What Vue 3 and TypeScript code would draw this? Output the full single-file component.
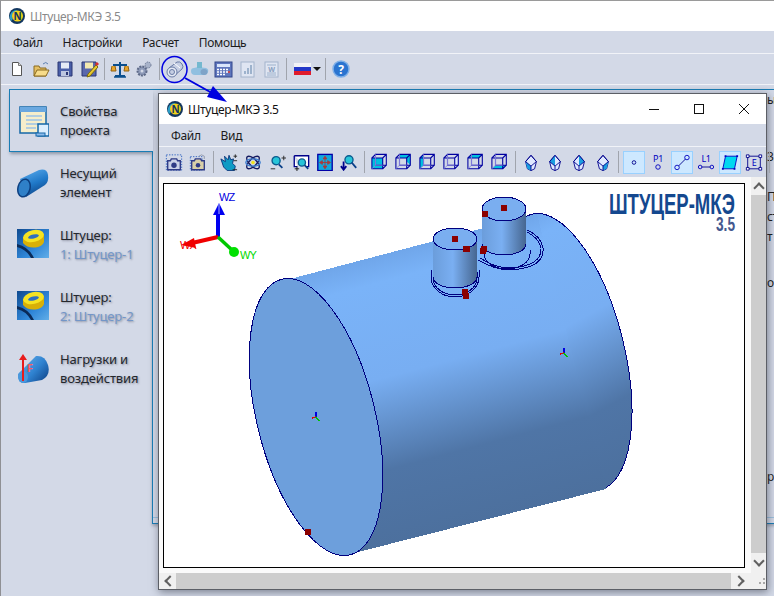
<script setup lang="ts">
// toolbar icons are 20x20 svg fragments, null = separator
const cube = (face: string, fill = '#00c0e0') =>
  `<polygon points="${face}" fill="${fill}"/>
   <path d="M5 1h12v12H5zM1 5h12v12H1zM1 5l4-4M13 5l4-4M13 17l4-4" fill="none" stroke="#0000a0" stroke-width="1.200"/>
   <path d="M1 17l4-4M5 13h8M5 1v12" fill="none" stroke="#8a86e0"/>`

const gem = (facet: string) =>
  `<path d="M10 2l6 7-2 8-4 2-4-2-2-8z" fill="#dfe9ff" stroke="#00008b"/>
   <path d="${facet}" fill="#1a9de0"/>
   <path d="M10 2l-6 7 6 5 6-5zM10 14v5" fill="none" stroke="#00008b"/>`

const docGhost = (inner: string) =>
  `<rect x="4" y="3" width="13" height="15" fill="#dfe5f2" stroke="#a4b4cc"/>${inner}`

const mainTools: (string | null)[] = [
  `<path d="M5.5 3.5h6l3 3v10h-9z" fill="#fff" stroke="#555"/><path d="M11.5 3.5v3h3" fill="#ddd" stroke="#777"/>`,
  `<path d="M3 17V7h5l1 2h6v8z" fill="#e5bf63" stroke="#8a6a20"/><path d="M3 17l3-6h12l-3 6z" fill="#f7dc8a" stroke="#8a6a20"/><path d="M12 5q3-3 5 0" fill="none" stroke="#5c7fb0"/>`,
  `<path d="M3 3h14v14H3z" fill="#4a5fa8" stroke="#2a3672"/><rect x="6" y="3.500" width="8" height="6" fill="#e6ebf5"/><rect x="6" y="12" width="8" height="5" fill="#bcc6e0"/><rect x="11" y="13" width="2" height="3" fill="#2a3672"/>`,
  `<path d="M3 3h14v14H3z" fill="#5a68ac" stroke="#2a3672"/><rect x="6" y="3.500" width="8" height="6" fill="#f4e9b0"/><path d="M9 15l8-9 2 2-8 9-3 1z" fill="#e8c92e" stroke="#7a6a10"/><path d="M16 5l2-2 2 2-2 2z" fill="#d8302c"/>`,
  null,
  `<path d="M10 3v13M3 6h14M5 17h10" fill="none" stroke="#0b4f8e" stroke-width="2"/><path d="M2 7l-1 5h5l-1-5M15 7l-1 5h5l-1-5" fill="#e8a52c" stroke="#94620f"/><path d="M4 18h12" stroke="#0b4f8e" stroke-width="1.500"/>`,
  `<circle cx="8" cy="12" r="4.500" fill="#8d9ab8" stroke="#5e6a88" stroke-width="2" stroke-dasharray="2 1"/><circle cx="8" cy="12" r="1.500" fill="#d3d9e7"/><circle cx="14" cy="6" r="3" fill="#a7b2c9" stroke="#6e7a96" stroke-dasharray="1.500 1"/>`,
  null,
  `<path d="M4 9l8-6q3-1 5 2t0 5l-8 7z" fill="#c6cfe4" stroke="#6a7ca6"/><circle cx="7" cy="13" r="5" fill="#e4e9f4" stroke="#6a7ca6"/><circle cx="7" cy="13" r="2.500" fill="#c6cfe4" stroke="#6a7ca6"/><path d="M9 4l6 5" stroke="#fff"/>`,
  `<path d="M2 12q0-3 3-3l4-1 8 1q3 1 2 4t-4 3H6q-4 0-4-4z" fill="#8fbfe0"/><rect x="8" y="3" width="5" height="6" fill="#74b8cf"/><ellipse cx="15" cy="13" rx="3.500" ry="3" fill="#7ea3c8"/>`,
  `<rect x="2" y="3" width="17" height="15" fill="#5f76bd" stroke="#33478c"/><rect x="4" y="5" width="13" height="3" fill="#d9e5fb"/><path d="M4 10.500h2m1 0h2m1 0h2m1 0h2M4 13h2m1 0h2m1 0h2m1 0h2M4 15.500h2m1 0h2m1 0h2" stroke="#fff" stroke-width="1.500"/><path d="M15 13h2" stroke="#e23a34" stroke-width="1.500"/>`,
  docGhost(`<path d="M7 15v-3h2v3zM10 15V9h2v6zM13 15V6h2v9z" fill="#9db2cc"/>`),
  docGhost(`<path d="M6 6h9M6 14h9M6 16h9" stroke="#9db2cc"/><text x="10.500" y="12.500" font-size="7" font-weight="700" text-anchor="middle" fill="#8aa0c0">W</text>`),
  null,
]

const viewTools: (string | null)[] = [
  `<rect x="1.500" y="1.500" width="17" height="17" fill="none" stroke="#2a5fc0" stroke-dasharray="1.500 1.500"/><path d="M3 8h3l1-2h6l1 2h3v10H3z" fill="#c9d0e8" stroke="#2e3a86" stroke-width="1.500"/><circle cx="10" cy="13" r="3" fill="#2e3a86"/>`,
  `<rect x="1.500" y="3.500" width="13" height="15" fill="none" stroke="#2a5fc0" stroke-dasharray="1.500 1.500"/><path d="M3 8h3l1-2h6l1 2h3v10H3z" fill="#d8cfa8" stroke="#2e3a86" stroke-width="1.500"/><circle cx="10" cy="13" r="2.500" fill="#2e3a86"/><path d="M11 3q3-3 6 0v3" fill="none" stroke="#8d95a8"/>`,
  null,
  `<path d="M1 6l5 3-1-6 4 4 1-5 2 5 3-1-1 5 3 3-1 5H8l-4-4z" fill="#0e9bc4" stroke="#08327a"/><path d="M15 3h4M17 1v4M15 8h4M14 18h5" stroke="#222"/>`,
  `<g fill="none" stroke="#141a60" stroke-width="1.500"><ellipse cx="10" cy="10" rx="9" ry="4" transform="rotate(45 10 10)"/><ellipse cx="10" cy="10" rx="9" ry="4" transform="rotate(-45 10 10)"/><ellipse cx="10" cy="10" rx="8" ry="4" stroke="#3f7fd0"/></g><circle cx="10" cy="10" r="2" fill="#f2e21e"/>`,
  `<circle cx="9" cy="8" r="4.500" fill="#27c4d8" stroke="#0a5a8e" stroke-width="1.500"/><path d="M12 12l4 4" stroke="#0a3f88" stroke-width="2"/><path d="M15 5h5M17.500 2.500v5M3 17h5" stroke="#222"/>`,
  `<path d="M2.500 2.500h16v12h-3M6 14.500H2.500v-12" fill="#fff" stroke="#00008b" stroke-width="1.500"/><circle cx="11" cy="10" r="4" fill="#27c4d8" stroke="#0a5a8e" stroke-width="1.500"/><path d="M14 13l4 4" stroke="#0a3f88" stroke-width="2"/><path d="M3 17h5M5.500 14.500v5" stroke="#111"/>`,
  `<rect x="2" y="1" width="16" height="18" fill="#12a8dc" stroke="#0000a8" stroke-width="1.500"/><path d="M10 4v12M5 10h10M10 3l-2 3h4zM10 17l-2-3h4zM4 10l3-2v4zM16 10l-3-2v4z" fill="#a83a3a" stroke="#a83a3a"/>`,
  `<circle cx="10" cy="7" r="4.500" fill="#27c4d8" stroke="#0a5a8e" stroke-width="1.500"/><path d="M13 10l5 6" stroke="#0a3f88" stroke-width="2"/><path d="M4 9v8M1 14l3 4 3-4" fill="none" stroke="#00008b" stroke-width="2"/>`,
  null,
  cube('1,5 13,5 13,17 1,17'),
  cube('5,1 17,1 17,13 13,9 13,5 5,5'),
  cube('1,5 5,1 5,13 1,17'),
  cube('13,5 17,1 17,13 13,17', '#dbe6fa'),
  cube('5,1 17,1 13,5 1,5'),
  cube('1,17 5,13 17,13 13,17'),
  null,
  gem('M4 9l6 5v5l-4-2z'),
  gem('M10 2l-6 7 6 5z'),
  gem('M10 2l6 7-6 5z'),
  gem('M16 9l-6 5v5l4-2z'),
  null,
  `<circle cx="10" cy="10" r="2" fill="none" stroke="#00008b"/>`,
  `<text x="10" y="9" font-size="10" text-anchor="middle" fill="#0000c0">P1</text><circle cx="10" cy="15" r="2.500" fill="none" stroke="#0000c0"/>`,
  `<path d="M4.500 15.500l11-11" stroke="#00008b"/><circle cx="4.500" cy="15.500" r="2.500" fill="#cde8ff" stroke="#0000c0"/><circle cx="15.500" cy="4.500" r="2.500" fill="#cde8ff" stroke="#0000c0"/>`,
  `<text x="10" y="9" font-size="10" text-anchor="middle" fill="#0000c0">L1</text><path d="M4 15h12" stroke="#00008b"/><circle cx="3.500" cy="15" r="2" fill="#d3d9e7" stroke="#0000c0"/><circle cx="16.500" cy="15" r="2" fill="#d3d9e7" stroke="#0000c0"/>`,
  `<path d="M5 3h13l-3 14H2z" fill="#00d8f0" stroke="#0000c0"/><path d="M4 2h2v2H4zM17 2h2v2h-2zM14 16h2v2h-2zM1 16h2v2H1z" fill="#0000c0"/>`,
  `<path d="M3 3h14v14H3z" fill="none" stroke="#00008b"/><path d="M1.500 1.500h3v3h-3zM15.500 1.500h3v3h-3zM1.500 15.500h3v3h-3zM15.500 15.500h3v3h-3z" fill="#fff" stroke="#00008b"/><text x="10" y="14" font-size="10" text-anchor="middle" fill="#0000c0">E</text>`,
  null,
]

const activeTools = new Set([22, 24, 26])

const navItems = [
  { icon: 'props', lines: ['Свойства', 'проекта'], active: true },
  { icon: 'tube', lines: ['Несущий', 'элемент'] },
  { icon: 'nozzle', lines: ['Штуцер:', '1: Штуцер-1'], sub: true },
  { icon: 'nozzle', lines: ['Штуцер:', '2: Штуцер-2'], sub: true },
  { icon: 'load', lines: ['Нагрузки и', 'воздействия'] },
]

// bits of the page behind the child window, gap = free space above the row
const behindRows = [
  { text: 'ы', gap: 2 },
  { text: '3.', gap: 41 },
  { text: 'П', gap: 24 },
  { text: 'ст', gap: 4 },
  { text: 'т', gap: 4 },
  { text: 'о', gap: 30 },
  { text: 'р', gap: 178 },
]

const markers = [
  [455, 239], [466, 249], [504, 208], [485, 214], [467, 249],
  [484, 249], [483, 251], [465, 292], [466, 296], [308, 532],
]
const miniAxes = [[316, 417], [564, 353]]
</script>

<template>
  <div class="app">
    <div class="titlebar main-title">
      <svg class="logo" viewBox="0 0 16 16">
        <circle cx="8" cy="8" r="8" fill="#12365f" />
        <path d="M2 13A7 7 0 0 1 8 2l-1 3a4 4 0 0 0-3 6z" fill="#2a9fc8" />
        <circle cx="8.500" cy="8" r="5.500" fill="#f2d21a" />
        <text x="8.500" y="11.500" font-size="10" font-weight="700" text-anchor="middle" fill="#12365f">N</text>
      </svg>
      <span>Штуцер-МКЭ 3.5</span>
    </div>
    <div class="menu main-menu">
      <span>Файл</span><span>Настройки</span><span>Расчет</span><span>Помощь</span>
    </div>
    <div class="toolbar main-tools">
      <template v-for="(tool, i) in mainTools" :key="i">
        <svg v-if="tool" class="tool" viewBox="0 0 20 20" v-html="tool"></svg>
        <i v-else class="sep"></i>
      </template>
      <svg class="tool" viewBox="0 0 20 20">
        <rect x="2" y="4" width="17" height="4" fill="#f2f2f6" />
        <rect x="2" y="8" width="17" height="4" fill="#2438c8" />
        <rect x="2" y="12" width="17" height="4" fill="#e01c2c" />
      </svg>
      <i class="caret"></i>
      <i class="sep"></i>
      <svg class="tool" viewBox="0 0 20 20">
        <circle cx="10" cy="10" r="8" fill="#2a74d0" stroke="#7fb0e8" stroke-width="1.500" />
        <text x="10" y="14.500" font-size="12" font-weight="700" text-anchor="middle" fill="#fff">?</text>
      </svg>
    </div>

    <div class="body">
      <nav class="nav">
        <div v-for="item in navItems" :key="item.lines[1]" class="nav-item" :class="{ active: item.active }">
          <svg v-if="item.icon === 'props'" class="nav-icon" viewBox="0 0 32 32">
            <rect x="3" y="2" width="26" height="26" fill="#f6eecb" stroke="#1668a8" stroke-width="1.500" />
            <rect x="3" y="2" width="26" height="5" fill="#6aa8e0" />
            <path d="M9 11h16M9 15h16M9 19h14M9 23h10" stroke="#9cc4e8" stroke-width="1.500" />
            <rect x="21" y="19" width="11" height="12" fill="#dcefff" stroke="#1668a8" stroke-width="1.500" />
            <rect x="19" y="28" width="9" height="3" fill="#8cbcec" stroke="#1668a8" />
          </svg>
          <svg v-else-if="item.icon === 'tube'" class="nav-icon" viewBox="0 0 32 32">
            <defs>
              <linearGradient id="tubeFill" x1="0.300" y1="0" x2="0.700" y2="1">
                <stop offset="0" stop-color="#55a6e8" />
                <stop offset="0.500" stop-color="#1f78c8" />
                <stop offset="1" stop-color="#0d3f80" />
              </linearGradient>
            </defs>
            <path d="M3 12L22 3q8-2 9 5t-3 10L9 30z" fill="url(#tubeFill)" />
            <ellipse cx="7" cy="21" rx="6" ry="9" fill="#2f80c8" stroke="#0d3f80" stroke-width="1.500" transform="rotate(14 7 21)" />
          </svg>
          <svg v-else-if="item.icon === 'nozzle'" class="nav-icon" viewBox="0 0 32 32">
            <defs>
              <linearGradient id="nozzleBack" x1="0" y1="0" x2="1" y2="1">
                <stop offset="0" stop-color="#0f4a90" />
                <stop offset="0.600" stop-color="#2f86d8" />
                <stop offset="1" stop-color="#62aee8" />
              </linearGradient>
            </defs>
            <rect y="0" width="32" height="29" fill="url(#nozzleBack)" />
            <path d="M0 15q12 3 17 14h-3Q9 20 0 18z" fill="#0a2a58" />
            <path d="M6 8v6q5 6 15 4 7-2 6-8V5z" fill="#d8b008" />
            <ellipse cx="16.500" cy="7" rx="10.500" ry="6" fill="#f5e322" transform="rotate(-12 16.500 7)" />
            <ellipse cx="16.500" cy="7.500" rx="5.500" ry="2" fill="#2f6fc0" transform="rotate(-12 16.500 7.500)" />
          </svg>
          <svg v-else class="nav-icon" viewBox="0 0 32 32">
            <defs>
              <linearGradient id="coneFill" x1="0" y1="0" x2="1" y2="0.800">
                <stop offset="0" stop-color="#6cb4ee" />
                <stop offset="0.600" stop-color="#2f82d0" />
                <stop offset="1" stop-color="#124a90" />
              </linearGradient>
            </defs>
            <path d="M1 21l18-18q9-1 12 9t-6 15L8 30q-7 1-7-9z" fill="url(#coneFill)" />
            <ellipse cx="6" cy="24" rx="5" ry="6" fill="#4a98dc" />
            <path d="M6 28V6" stroke="#e81c1c" stroke-width="2" />
            <path d="M6 1l-4 6h8z" fill="#e81c1c" />
            <text x="10" y="19" font-size="11" font-weight="700" fill="#ff5a5a">F</text>
          </svg>
          <div class="nav-text">
            <span>{{ item.lines[0] }}</span>
            <span :class="{ sub: item.sub }">{{ item.lines[1] }}</span>
          </div>
        </div>
      </nav>
      <section class="pane">
        <div
          v-for="row in behindRows"
          :key="row.text"
          class="behind-row"
          :style="{ marginTop: row.gap + 'px' }"
        >{{ row.text }}</div>
        <div class="pane-foot"></div>
      </section>
    </div>

    <div class="child">
      <div class="titlebar child-title">
        <svg class="logo" viewBox="0 0 16 16">
          <circle cx="8" cy="8" r="8" fill="#12365f" />
          <path d="M2 13A7 7 0 0 1 8 2l-1 3a4 4 0 0 0-3 6z" fill="#2a9fc8" />
          <circle cx="8.500" cy="8" r="5.500" fill="#f2d21a" />
          <text x="8.500" y="11.500" font-size="10" font-weight="700" text-anchor="middle" fill="#12365f">N</text>
        </svg>
        <span>Штуцер-МКЭ 3.5</span>
        <div class="win-buttons">
          <svg viewBox="0 0 10 10"><path d="M0 5.500h10" stroke="#111" /></svg>
          <svg viewBox="0 0 10 10"><rect x="0.500" y="0.500" width="9" height="9" fill="none" stroke="#111" /></svg>
          <svg viewBox="0 0 10 10"><path d="M0 0l10 10M10 0L0 10" stroke="#111" /></svg>
        </div>
      </div>
      <div class="menu child-menu"><span>Файл</span><span>Вид</span></div>
      <div class="toolbar child-tools">
        <template v-for="(tool, i) in viewTools" :key="i">
          <span v-if="tool" class="tool-slot" :class="{ on: activeTools.has(i) }">
            <svg class="tool" viewBox="0 0 20 20" v-html="tool"></svg>
          </span>
          <i v-else class="sep"></i>
        </template>
      </div>

      <div class="work">
        <div class="canvas">
          <svg class="scene" viewBox="164 184 580 383">
            <defs>
              <linearGradient id="bodyFill" gradientUnits="userSpaceOnUse" x1="420" y1="230" x2="500" y2="530">
                <stop offset="0" stop-color="#6a9fe2" />
                <stop offset="0.130" stop-color="#7ab3f8" />
                <stop offset="0.430" stop-color="#78aef2" />
                <stop offset="0.720" stop-color="#4f75a6" />
                <stop offset="1" stop-color="#4c6f9c" />
              </linearGradient>
              <linearGradient id="stubFill" x1="0" y1="0" x2="1" y2="0">
                <stop offset="0" stop-color="#6b9ddb" />
                <stop offset="0.450" stop-color="#7aaff2" />
                <stop offset="1" stop-color="#466690" />
              </linearGradient>
            </defs>

            <g shape-rendering="crispEdges">
              <ellipse cx="566" cy="352" rx="58" ry="142" fill="url(#bodyFill)" stroke="#00007f" transform="rotate(-14 566 352)" />
              <path d="M290 279L537 214L606 489L358 552z" fill="url(#bodyFill)" />
              <ellipse cx="316" cy="417" rx="59" ry="142" fill="#6d9fdc" stroke="#00007f" transform="rotate(-14 316 417)" />

              <g fill="none" stroke="#00007f">
                <path d="M478 260Q495 270 510 270Q545 268 543 248Q541 236 527 230" />
                <path d="M480 258Q495 268 510 268Q542 266 541 248Q539 238 527 232" />
                <path d="M431 270v7A24 20 0 0 0 479 277v-7" />
                <path d="M433 272v6A22 17 0 0 0 477 278v-6" />
                <path d="M484 250v4A20 13 0 0 0 530 254v-4" />
              </g>

              <path d="M482 209V244A22 11 0 0 0 526 244V209z" fill="url(#stubFill)" />
              <path d="M482 244A22 11 0 0 0 526 244" fill="none" stroke="#00007f" />
              <ellipse cx="504" cy="209" rx="22" ry="12" fill="#7aaef0" stroke="#00007f" />

              <path d="M433 239V277A22 11 0 0 0 477 277V239z" fill="url(#stubFill)" />
              <path d="M433 277A22 11 0 0 0 477 277" fill="none" stroke="#00007f" />
              <ellipse cx="455" cy="239" rx="22" ry="11" fill="#7aaef0" stroke="#00007f" />

              <rect v-for="(m, i) in markers" :key="i" :x="m[0] - 3" :y="m[1] - 3" width="6" height="6" fill="#8b0000" />

              <g v-for="(a, i) in miniAxes" :key="'mini' + i" :transform="`translate(${a[0]} ${a[1]})`" stroke-width="1.500">
                <path d="M0 0v-5" stroke="#0000e0" />
                <path d="M0 0l-4 1" stroke="#e00000" />
                <path d="M0 0l3 4" stroke="#00c000" />
              </g>
            </g>

            <!-- axes triad -->
            <path d="M218 237V212" stroke="#0000f0" stroke-width="4" />
            <path d="M219 203l-6 12h12z" fill="#0000f0" />
            <path d="M219 204v10" stroke="#aab0ff" />
            <path d="M218 237l-26 6" stroke="#f00000" stroke-width="4" />
            <path d="M181 245l13-7 2 10z" fill="#f00000" />
            <path d="M218 237l14 13" stroke="#00c800" stroke-width="3.500" />
            <circle cx="234" cy="252" r="5" fill="#00e000" />
            <text class="axis" x="219" y="201" fill="#0000e0">WZ</text>
            <text class="axis" x="180" y="249" fill="#f00000">WX</text>
            <text class="axis" x="240" y="259" fill="#00d800">WY</text>

            <text class="brand" x="609" y="214" textLength="126" lengthAdjust="spacingAndGlyphs">ШТУЦЕР-МКЭ</text>
            <text class="brand-ver" x="716" y="231" textLength="19" lengthAdjust="spacingAndGlyphs">3.5</text>
          </svg>
        </div>
        <div class="vbar">
          <span class="sb-btn up"><i class="chev up-chev"></i></span>
          <span class="sb-track"></span>
          <span class="sb-btn down"><i class="chev down-chev"></i></span>
        </div>
      </div>
      <div class="hbar">
        <span class="sb-btn left"><i class="chev left-chev"></i></span>
        <span class="sb-track"></span>
        <span class="sb-btn right"><i class="chev right-chev"></i></span>
        <span class="grip"></span>
      </div>
    </div>

    <!-- blue callout drawn over the screenshot -->
    <svg class="callout" viewBox="0 0 774 596">
      <ellipse cx="174.500" cy="69.500" rx="12.500" ry="13" fill="none" stroke="#0000e0" stroke-width="1.500" />
      <path d="M185 78L212 93" stroke="#0000e0" stroke-width="2" />
      <path d="M213 86L207 97L227 102z" fill="#0000e0" />
    </svg>
  </div>
</template>

<style>
html,
body {
  margin: 0;
  background: #d3d9e7;
}
</style>

<style scoped>
.app {
  position: relative;
  box-sizing: border-box;
  width: 774px;
  height: 596px;
  overflow: hidden;
  border-top: 1px solid #9a9a9a;
  border-left: 1px solid #8f9094;
  background: #d3d9e7;
  color: #1c1c1c;
  font-family: "Noto Sans", "Liberation Sans", sans-serif;
  font-size: 12px;
  letter-spacing: -0.35px;
}
.titlebar {
  display: flex;
  align-items: center;
  height: 30px;
  background: #fff;
}
.logo {
  width: 16px;
  height: 16px;
  margin-right: 5px;
}
.main-title {
  padding-left: 8px;
  color: #8a8a8a;
}
.child-title {
  padding-left: 8px;
  color: #111;
}
.win-buttons {
  display: flex;
  gap: 35px;
  margin-left: auto;
  margin-right: 17px;
}
.win-buttons svg {
  width: 10px;
  height: 10px;
}
.menu {
  display: flex;
  align-items: center;
  gap: 20px;
  height: 22px;
}
.main-menu {
  padding-left: 12px;
}
.child-menu {
  padding-left: 12px;
}
.toolbar {
  display: flex;
  align-items: center;
  height: 30px;
  border-top: 1px solid #f1f3f8;
}
.main-tools {
  padding-left: 4px;
  border-bottom: 1px solid #f1f3f8;
}
.child-tools {
  padding-left: 3px;
}
.tool {
  display: block;
  width: 20px;
  height: 20px;
  padding: 2px;
  flex: none;
}
.tool-slot {
  box-sizing: border-box;
  display: block;
  width: 22px;
  height: 23px;
  margin: 0 1px;
  border: 1px solid transparent;
}
.tool-slot .tool {
  width: 18px;
  height: 18px;
  padding: 1.500px 1px;
}
.tool-slot.on {
  background: #cde8ff;
  border-color: #99d1ff;
}
.sep {
  flex: none;
  width: 1px;
  height: 22px;
  margin: 0 3px;
  background: #a0a4ad;
}
.caret {
  flex: none;
  width: 0;
  height: 0;
  margin: 0 1px 0 -1px;
  border-left: 4px solid transparent;
  border-right: 4px solid transparent;
  border-top: 4px solid #111;
}
.body {
  display: flex;
  padding-top: 4px;
}
.nav {
  flex: none;
  position: relative;
  z-index: 1;
  width: 144px;
  margin-left: 8px;
}
.nav-item {
  box-sizing: border-box;
  display: flex;
  align-items: center;
  gap: 11px;
  height: 62px;
  padding-left: 8px;
}
.nav-item.active {
  height: 63px;
  background: #d3d9e7;
  border: 1px solid #1a7db5;
  border-right: none;
  box-shadow: 0 3px 3px -1px rgba(60, 70, 90, 0.45);
  padding-left: 7px;
}
.nav-icon {
  flex: none;
  width: 32px;
  height: 32px;
}
.nav-text {
  display: flex;
  flex-direction: column;
  font-size: 13px;
  line-height: 19px;
  letter-spacing: -0.15px;
  color: #24282e;
  text-shadow: 1px 1px 2px rgba(40, 40, 60, 0.4);
}
.nav-text .sub {
  color: #7396c8;
}
.pane {
  box-sizing: border-box;
  flex: 1;
  display: flex;
  flex-direction: column;
  height: 435px;
  margin-left: -1px;
  padding-left: 614px;
  border: 1px solid #1a7db5;
  border-right: none;
  box-shadow: 0 2px 3px rgba(60, 70, 90, 0.35);
}
.behind-row {
  height: 16px;
  line-height: 16px;
  font-size: 12px;
  white-space: nowrap;
}
.pane-foot {
  height: 5px;
  margin-top: auto;
  margin-left: -614px;
  border-top: 1px solid #9cc0dd;
}
.child {
  position: absolute;
  left: 157px;
  top: 92px;
  box-sizing: border-box;
  display: flex;
  flex-direction: column;
  width: 609px;
  height: 497px;
  border: 1px solid #5c5f66;
  background: #d3d9e7;
  box-shadow: 1px 2px 8px rgba(30, 35, 50, 0.5);
}
.work {
  display: flex;
  height: 396px;
  background: #fafafa;
  padding-left: 4px;
}
.canvas {
  box-sizing: border-box;
  width: 582px;
  height: 385px;
  margin-top: 6px;
  border: 1px solid #000;
  background: #fff;
}
.scene {
  display: block;
  width: 580px;
  height: 383px;
}
.axis {
  font-family: "Liberation Sans", sans-serif;
  font-size: 11px;
  letter-spacing: -1px;
}
.brand {
  font-family: "Liberation Sans", sans-serif;
  font-size: 30px;
  font-weight: 700;
  letter-spacing: 0;
  fill: #14488f;
}
.brand-ver {
  font-family: "Liberation Sans", sans-serif;
  font-size: 20px;
  font-weight: 700;
  letter-spacing: 0;
  fill: #44588f;
}
.vbar {
  display: flex;
  flex-direction: column;
  width: 15px;
  margin-left: 6px;
}
.hbar {
  display: flex;
  height: 16px;
  background: #f0f0f0;
}
.sb-track {
  flex: 1;
  background: #cdcdcd;
}
.sb-btn {
  flex: none;
  display: flex;
  align-items: center;
  justify-content: center;
  background: #f0f0f0;
}
.sb-btn.up {
  height: 18px;
}
.sb-btn.down {
  height: 20px;
}
.sb-btn.left {
  width: 17px;
}
.sb-btn.right {
  width: 19px;
}
.grip {
  flex: none;
  width: 16px;
  background:
    radial-gradient(circle, #a8a8a8 1px, transparent 1px) 8px 8px / 4px 4px no-repeat,
    radial-gradient(circle, #a8a8a8 1px, transparent 1px) 12px 8px / 4px 4px no-repeat,
    radial-gradient(circle, #a8a8a8 1px, transparent 1px) 12px 4px / 4px 4px no-repeat;
}
.chev {
  display: block;
  width: 6px;
  height: 6px;
  border-top: 2px solid #606060;
  border-left: 2px solid #606060;
}
.up-chev {
  transform: translateY(2px) rotate(45deg);
}
.down-chev {
  transform: translateY(-2px) rotate(225deg);
}
.left-chev {
  transform: translateX(2px) rotate(-45deg);
}
.right-chev {
  transform: translateX(-2px) rotate(135deg);
}
.callout {
  position: absolute;
  left: -1px;
  top: -1px;
  width: 774px;
  height: 596px;
  pointer-events: none;
}
</style>
